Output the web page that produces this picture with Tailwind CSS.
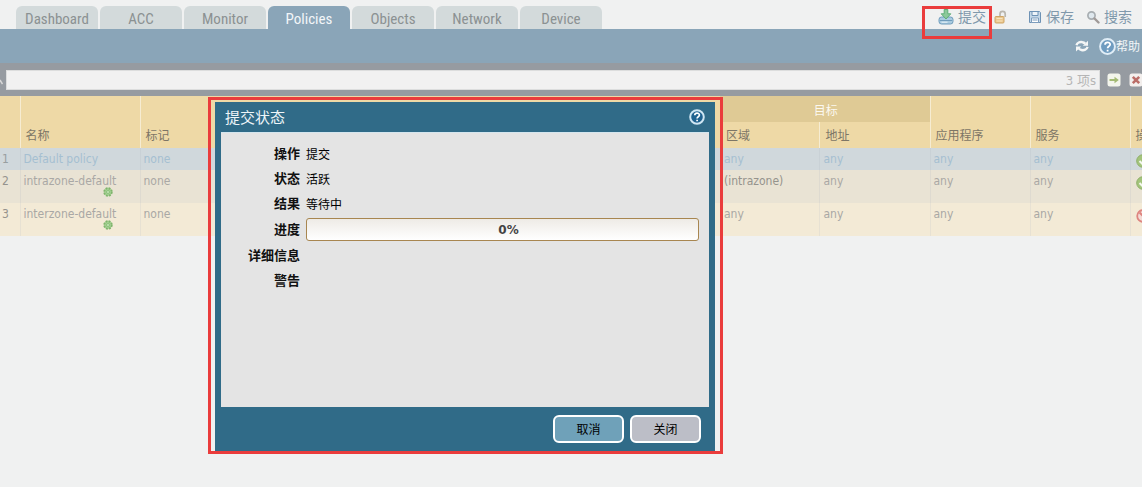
<!DOCTYPE html>
<html lang="zh-CN">
<head>
<meta charset="utf-8">
<meta name="viewport" content="width=device-width, initial-scale=1">
<title>Policies</title>
<script src="https://cdn.jsdelivr.net/npm/@tailwindcss/browser@4"></script>
</head>
<body class="relative min-h-screen overflow-x-hidden bg-[#f0f1f1] font-['DejaVu_Sans_Condensed','DejaVu_Sans','Noto_Sans_CJK_SC',sans-serif] text-xs text-[#a9a8a5]">

<header class="flex items-end justify-between pl-4">
  <nav class="flex gap-0.5 pt-1.5 font-['Liberation_Sans_Narrow','Roboto_Condensed','Liberation_Sans',sans-serif] text-[15px] leading-[26px] text-[#8b9192]">
    <a href="#" class="h-[23px] w-[82px] rounded-t-md bg-[#d3dadb] text-center">Dashboard</a>
    <a href="#" class="h-[23px] w-[82px] rounded-t-md bg-[#d3dadb] text-center">ACC</a>
    <a href="#" class="h-[23px] w-[82px] rounded-t-md bg-[#d3dadb] text-center">Monitor</a>
    <a href="#" class="h-[23px] w-[82px] rounded-t-md bg-[#8aa5b8] text-center text-[#f3f6f8]" aria-current="page">Policies</a>
    <a href="#" class="h-[23px] w-[82px] rounded-t-md bg-[#d3dadb] text-center">Objects</a>
    <a href="#" class="h-[23px] w-[82px] rounded-t-md bg-[#d3dadb] text-center">Network</a>
    <a href="#" class="h-[23px] w-[82px] rounded-t-md bg-[#d3dadb] text-center">Device</a>
  </nav>
  <div class="flex h-[25px] items-center pr-2.5 text-sm leading-6 text-[#8099ac]">
    <button type="button" class="relative flex items-center gap-1">
      <svg class="size-4" viewBox="0 0 16 16" aria-hidden="true">
        <rect x="1" y="8" width="14" height="7" rx="2.500" fill="#a9cbe0" stroke="#6f9cbc"/>
        <path d="M2 11.500h12" stroke="#6f9cbc"/>
        <path d="M3.500 13.200h6" stroke="#e8f2f8"/>
        <path d="M6.200.5h3.600v4.300h3L8 10 3.200 4.800h3z" fill="#8cc99a" stroke="#5fae78"/>
      </svg>
      提交
      <span class="pointer-events-none absolute -left-4 top-px h-[33px] w-[70px] border-3 border-[#ea3c3c]"></span>
    </button>
    <button type="button" class="ml-2" aria-label="解锁">
      <svg class="size-3.5" viewBox="0 0 14 14" aria-hidden="true">
        <path d="M6 6.500V4a2.600 2.600 0 0 1 5.200 0v3" fill="none" stroke="#b9b6ae" stroke-width="1.700"/>
        <rect x="1" y="6.500" width="9" height="6.500" rx="1" fill="#eac78d" stroke="#cfa566"/>
        <path d="M2.500 8.500h6M2.500 11h6" stroke="#f7e3bd"/>
      </svg>
    </button>
    <button type="button" class="ml-5 flex items-center gap-1">
      <svg class="size-3.5" viewBox="0 0 14 14" aria-hidden="true">
        <path d="M1.500 1.500h10l1 1v10h-11z" fill="#c5d8e8" stroke="#6e92b5"/>
        <path d="M4 1.500h6v4H4z" fill="#eef4f9" stroke="#6e92b5"/>
        <path d="M3.500 8h7v4.500h-7z" fill="#fff" stroke="#7d9dbd"/>
        <path d="M4.500 10h5" stroke="#7d9dbd"/>
      </svg>
      保存
    </button>
    <button type="button" class="ml-3 flex items-center gap-1">
      <svg class="size-3.5" viewBox="0 0 14 14" aria-hidden="true">
        <circle cx="5.500" cy="5.500" r="3.600" fill="#dfe8ee" stroke="#a7adb1" stroke-width="1.700"/>
        <path d="M8.500 8.500l4 4" stroke="#a09a98" stroke-width="2.400" stroke-linecap="round"/>
      </svg>
      搜索
    </button>
  </div>
</header>

<div class="flex h-[34px] items-center justify-end gap-2.5 bg-[#8aa5b8] pr-0.5 text-[#f1f5f7]">
  <button type="button" aria-label="刷新">
    <svg class="size-3.5" viewBox="0 0 14 14" aria-hidden="true">
      <path d="M1.500 6.300C2 3.600 5 2.600 7.500 3.200c1.200.2 2 .8 2.700 1.500" fill="none" stroke="#f4f6f6" stroke-width="2.400"/>
      <path d="M13 1.800v5H7.800z" fill="#f4f6f6"/>
      <path d="M12.500 7.900c-.5 2.700-3.500 3.700-6 3.100-1.200-.2-2-.8-2.700-1.500" fill="none" stroke="#f4f6f6" stroke-width="2.400"/>
      <path d="M1 12.400v-5h5.200z" fill="#f4f6f6"/>
    </svg>
  </button>
  <a href="#" class="flex items-center">
    <svg class="size-[17px]" viewBox="0 0 16 16" aria-hidden="true">
      <circle cx="8" cy="8" r="7" fill="#6f9cc0" stroke="#e0edf6" stroke-width="1.800"/>
      <path d="M5.700 6.300C5.700 3.300 10.500 3.400 10.500 6.100 10.500 7.800 8.100 7.700 8.100 9.600M8.100 11v1.600" fill="none" stroke="#fff" stroke-width="1.700"/>
    </svg>
    <span class="pt-0.5">帮助</span>
  </a>
</div>

<form class="flex h-[33px] items-center bg-[#969ba1]">
  <svg class="mr-[3px] h-3 w-[3px] shrink-0" viewBox="0 0 3 12" aria-hidden="true"><path d="M0 6l2.500 4" stroke="#d8d8d8" stroke-width="1.500"/></svg>
  <div class="flex h-5 min-w-0 flex-1 items-center border border-[#dcdddd] bg-[#f1f1f1] pr-[3px]">
    <input type="text" aria-label="过滤" class="h-full min-w-0 flex-1 bg-transparent outline-none">
    <span class="pt-0.5 text-[13px] text-[#b5b5b5]">3 项s</span>
  </div>
  <button type="submit" class="ml-[7px]" aria-label="应用过滤">
    <svg class="size-3.5" viewBox="0 0 14 14" aria-hidden="true">
      <rect x=".5" y=".5" width="13" height="13" rx="2.500" fill="#f3f5ec"/>
      <path d="M2.500 6h5V3.700L11.800 7 7.500 10.300V8h-5z" fill="#a3ba74"/>
    </svg>
  </button>
  <button type="reset" class="ml-2 -mr-px" aria-label="清除过滤">
    <svg class="size-3.5" viewBox="0 0 14 14" aria-hidden="true">
      <rect x=".5" y=".5" width="13" height="13" rx="2.500" fill="#f3efed"/>
      <path d="M3.800 3.800l6.400 6.400M10.200 3.800l-6.400 6.400" stroke="#bb6d68" stroke-width="2.600"/>
    </svg>
  </button>
</form>

<main class="overflow-hidden">
  <table class="w-[calc(100%+48px)] table-fixed border-collapse text-left">
    <colgroup>
      <col class="w-5"><col class="w-[120px]"><col class="w-[120px]"><col>
      <col class="w-[100px]"><col class="w-[110px]"><col class="w-[100px]"><col class="w-[100px]"><col class="w-[60px]">
    </colgroup>
    <thead class="bg-[#eed9a6] text-[#7d7666]">
      <tr class="h-[26px] align-bottom">
        <th rowspan="2"></th>
        <th rowspan="2" class="border-l border-[#f6ecd2] pb-1 pl-[5px] font-normal">名称</th>
        <th rowspan="2" class="border-l border-[#f6ecd2] pb-1 pl-[5px] font-normal">标记</th>
        <th rowspan="2"></th>
        <th colspan="2" class="bg-[#dfca95] pl-0.5 pt-1 text-center align-middle font-normal text-[#fbf8f0]">目标</th>
        <th rowspan="2" class="border-l border-[#f6ecd2] pb-1 pl-[5px] font-normal">应用程序</th>
        <th rowspan="2" class="border-l border-[#f6ecd2] pb-1 pl-[5px] font-normal">服务</th>
        <th rowspan="2" class="border-l border-[#f6ecd2] pb-1 pl-[5px] font-normal">操作</th>
      </tr>
      <tr class="h-[26px] align-bottom">
        <th class="pb-1 pl-1.5 font-normal">区域</th>
        <th class="border-l border-[#f6ecd2] pb-1 pl-[5px] font-normal">地址</th>
      </tr>
    </thead>
    <tbody class="align-top leading-4">
      <tr class="h-[22px] bg-[#d0d8dc] text-[#a5bfd1]">
        <td class="pl-0.5 pt-[3px] text-[#989fa1]">1</td>
        <td class="border-l border-[#c9d1d6] pl-[3px] pt-[3px]">Default policy</td>
        <td class="border-l border-[#c9d1d6] pl-[3px] pt-[3px]">none</td>
        <td></td>
        <td class="pl-1 pt-[3px]">any</td>
        <td class="border-l border-[#c9d1d6] pl-[3px] pt-[3px]">any</td>
        <td class="border-l border-[#c9d1d6] pl-[3px] pt-[3px]">any</td>
        <td class="border-l border-[#c9d1d6] pl-[3px] pt-[3px]">any</td>
        <td class="border-l border-[#c9d1d6] pl-[5px] pt-1.5">
          <svg class="size-3.5" viewBox="0 0 14 14" role="img" aria-label="允许"><circle cx="7" cy="7" r="6.300" fill="#a3c47b" stroke="#8fb06a"/><path d="M3.500 7l2.500 2.500 4.500-5" fill="none" stroke="#f4f8ee" stroke-width="2"/></svg>
        </td>
      </tr>
      <tr class="h-[33px] bg-[#e9e3d4]">
        <td class="pl-0.5 pt-[3px] text-[#95938d]">2</td>
        <td class="border-l border-[#dedad0] pl-[3px] pt-[3px]">intrazone-default
          <svg class="-mt-0.5 ml-[79px] block size-2.5" viewBox="0 0 10 10" aria-hidden="true"><circle cx="5" cy="5" r="3.800" fill="#a5d193" stroke="#7fb56c" stroke-width="1.800" stroke-dasharray="2 1"/><circle cx="5" cy="5" r="1.500" fill="#c9e6bb" stroke="#8cc27a"/></svg>
        </td>
        <td class="border-l border-[#dedad0] pl-[3px] pt-[3px]">none</td>
        <td></td>
        <td class="pl-1 pt-[3px] text-[#95938d]">(intrazone)</td>
        <td class="border-l border-[#dedad0] pl-[3px] pt-[3px]">any</td>
        <td class="border-l border-[#dedad0] pl-[3px] pt-[3px]">any</td>
        <td class="border-l border-[#dedad0] pl-[3px] pt-[3px]">any</td>
        <td class="border-l border-[#dedad0] pl-[5px] pt-1.5">
          <svg class="size-3.5" viewBox="0 0 14 14" role="img" aria-label="允许"><circle cx="7" cy="7" r="6.300" fill="#a3c47b" stroke="#8fb06a"/><path d="M3.500 7l2.500 2.500 4.500-5" fill="none" stroke="#f4f8ee" stroke-width="2"/></svg>
        </td>
      </tr>
      <tr class="h-[33px] bg-[#f3ead6]">
        <td class="pl-0.5 pt-[3px] text-[#95938d]">3</td>
        <td class="border-l border-[#e7e1d3] pl-[3px] pt-[3px]">interzone-default
          <svg class="-mt-0.5 ml-[79px] block size-2.5" viewBox="0 0 10 10" aria-hidden="true"><circle cx="5" cy="5" r="3.800" fill="#a5d193" stroke="#7fb56c" stroke-width="1.800" stroke-dasharray="2 1"/><circle cx="5" cy="5" r="1.500" fill="#c9e6bb" stroke="#8cc27a"/></svg>
        </td>
        <td class="border-l border-[#e7e1d3] pl-[3px] pt-[3px]">none</td>
        <td></td>
        <td class="pl-1 pt-[3px]">any</td>
        <td class="border-l border-[#e7e1d3] pl-[3px] pt-[3px]">any</td>
        <td class="border-l border-[#e7e1d3] pl-[3px] pt-[3px]">any</td>
        <td class="border-l border-[#e7e1d3] pl-[3px] pt-[3px]">any</td>
        <td class="border-l border-[#e7e1d3] pl-[5px] pt-1.5">
          <svg class="size-3.5" viewBox="0 0 14 14" role="img" aria-label="拒绝"><circle cx="7" cy="7" r="5.800" fill="#f4dcd6" stroke="#de8580" stroke-width="1.800"/><path d="M3.500 3.500l7 7" stroke="#de8580" stroke-width="2"/></svg>
        </td>
      </tr>
    </tbody>
  </table>
</main>

<div class="absolute left-[208px] top-[97px] w-[515px] border-3 border-[#ea3c3c] pl-1 pr-[5px] pt-0.5">
  <section role="dialog" aria-labelledby="dialog-title" class="bg-[#306b88] px-1.5 text-black">
    <header class="flex h-[30px] items-center justify-between pl-1 pr-1">
      <h2 id="dialog-title" class="pt-1 text-[15px] text-[#eef5f8]">提交状态</h2>
      <button type="button" aria-label="帮助">
        <svg class="size-4" viewBox="0 0 16 16" aria-hidden="true">
          <circle cx="8" cy="8" r="6.800" fill="#1f6290" stroke="#cfe6f3" stroke-width="2"/>
          <path d="M5.800 6.300C5.800 3.500 10.400 3.600 10.400 6.100 10.400 7.700 8.100 7.700 8.100 9.400M8.100 10.700v1.600" fill="none" stroke="#fff" stroke-width="1.700"/>
        </svg>
      </button>
    </header>
    <div class="h-[275px] border-t border-[#d5e6ee] bg-[#e4e4e4] pr-2.5 pt-2">
      <dl class="grid grid-cols-[79px_1fr] grid-rows-[25px_25px_25px_27px_25px_25px] items-center gap-x-1.5 [&>dt]:text-right [&>dt]:text-[13px] [&>dt]:font-bold [&>dt]:text-[#111]">
        <dt>操作</dt><dd class="pt-0.5">提交</dd>
        <dt>状态</dt><dd class="pt-0.5">活跃</dd>
        <dt>结果</dt><dd class="pt-0.5">等待中</dd>
        <dt>进度</dt>
        <dd role="progressbar" aria-label="进度" aria-valuenow="0" aria-valuemin="0" aria-valuemax="100" class="flex h-[23px] items-center justify-center rounded-[3px] border border-[#a88650] bg-linear-to-b from-[#eeebe6] to-white pl-3 font-['DejaVu_Sans',sans-serif] font-bold text-[#444]">0%</dd>
        <dt>详细信息</dt><dd></dd>
        <dt>警告</dt><dd></dd>
      </dl>
    </div>
    <footer class="flex h-11 items-center justify-end gap-1.5 pr-2">
      <button type="button" class="h-7 w-[71px] rounded-md border-2 border-white bg-[#6fa1b9] pt-0.5">取消</button>
      <button type="button" class="h-7 w-[71px] rounded-md border-2 border-white bg-[#bcbec7] pt-0.5">关闭</button>
    </footer>
  </section>
</div>

</body>
</html>
